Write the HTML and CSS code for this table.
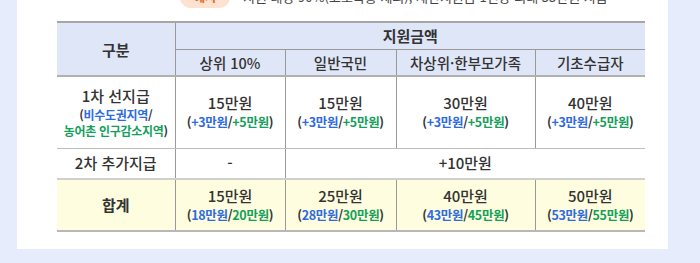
FILE: index.html
```html
<!DOCTYPE html>
<html lang="ko">
<head>
<meta charset="utf-8">
<link rel="stylesheet" href="styles.css">
</head>
<body>
<div class="page">
  <div class="card">
    <div class="notice">
      <span class="pill">예시</span>
      <span class="notice-text">지원 대상 90%(고소득층 제외), 재난지원금 1인당 최대 55만원 지급</span>
    </div>
    <table class="grid">
      <colgroup>
        <col class="c0"><col class="c1"><col class="c2"><col class="c3"><col class="c4">
      </colgroup>
      <thead>
        <tr class="h1">
          <th rowspan="2" class="first">구분</th>
          <th colspan="4">지원금액</th>
        </tr>
        <tr class="h2">
          <th>상위 10%</th>
          <th>일반국민</th>
          <th>차상위·한부모가족</th>
          <th>기초수급자</th>
        </tr>
      </thead>
      <tbody>
        <tr class="r1">
          <td class="first">
            <div class="main">1차 선지급</div>
            <div class="sub">(<span class="b">비수도권지역</span>/</div>
            <div class="sub"><span class="g">농어촌 인구감소지역</span>)</div>
          </td>
          <td><div class="main">15만원</div><div class="sub">(<span class="b">+3만원</span>/<span class="g">+5만원</span>)</div></td>
          <td><div class="main">15만원</div><div class="sub">(<span class="b">+3만원</span>/<span class="g">+5만원</span>)</div></td>
          <td><div class="main">30만원</div><div class="sub">(<span class="b">+3만원</span>/<span class="g">+5만원</span>)</div></td>
          <td><div class="main">40만원</div><div class="sub">(<span class="b">+3만원</span>/<span class="g">+5만원</span>)</div></td>
        </tr>
        <tr class="r2">
          <td class="first"><span class="main">2차 추가지급</span></td>
          <td><span class="main">-</span></td>
          <td colspan="3"><span class="main">+10만원</span></td>
        </tr>
        <tr class="total">
          <td class="first"><span class="main strong">합계</span></td>
          <td><div class="main">15만원</div><div class="sub">(<span class="b">18만원</span>/<span class="g">20만원</span>)</div></td>
          <td><div class="main">25만원</div><div class="sub">(<span class="b">28만원</span>/<span class="g">30만원</span>)</div></td>
          <td><div class="main">40만원</div><div class="sub">(<span class="b">43만원</span>/<span class="g">45만원</span>)</div></td>
          <td><div class="main">50만원</div><div class="sub">(<span class="b">53만원</span>/<span class="g">55만원</span>)</div></td>
        </tr>
      </tbody>
    </table>
  </div>
</div>
</body>
</html>
```
FILE: styles.css
```css
* { box-sizing: border-box; }
html, body {
  margin: 0;
  padding: 0;
  background: #e6ecfb;
  overflow: hidden;
}
body {
  font-family: "Noto Sans CJK KR", "Noto Sans", sans-serif;
  color: #333;
}
.page {
  width: 700px;
  height: 263px;
  padding: 0 32px 0 17px;
}
.card {
  width: 651px;
  margin-top: -14px;
  background: #fff;
  padding: 0 0 17px 40px;
}
.notice {
  height: 22px;
  display: flex;
  align-items: center;
  margin-left: 123px;
}
.pill {
  display: inline-block;
  width: 50px;
  height: 22px;
  line-height: 22px;
  border-radius: 11px;
  background: #fde2cf;
  color: #e4661c;
  font-size: 12px;
  font-weight: 700;
  text-align: center;
}
.notice-text {
  margin-left: 13px;
  font-size: 13px;
  color: #444;
  line-height: 22px;
}
.grid {
  margin-top: 13px;
  width: 588px;
  border-collapse: collapse;
  table-layout: fixed;
  font-size: 14px;
}
.c0 { width: 118px; }
.c1 { width: 110px; }
.c2 { width: 111px; }
.c3 { width: 139px; }
.c4 { width: 110px; }
th, td {
  padding: 0;
  text-align: center;
  vertical-align: middle;
  border-left: 1px solid #999;
}
th.first, td.first { border-left: none; }
thead th {
  background: #dfe6f7;
  font-weight: 700;
  color: #333;
  font-size: 15px;
}
.h1 th { height: 27px; border-top: 2px solid #a6a6a6; }
.h1 th[colspan] { border-bottom: 1px solid #999; }
.h2 th { height: 27px; font-size: 14.5px; font-weight: 500; border-bottom: 2px solid #b0b0b0; }
.h1 th.first { border-bottom: 2px solid #b0b0b0; }
.r1 td { height: 72px; border-bottom: 1px solid #bdbdbd; }
.r2 td { height: 31px; }
.total td {
  height: 52px;
  background: #fefddf;
  border-top: 2px solid #d0d0d0;
  border-bottom: 2px solid #b8b8b8;
}
.main {
  font-size: 15px;
  font-weight: 500;
  line-height: 20px;
  color: #333;
}
.strong { font-weight: 700; }
.sub {
  font-size: 12.5px;
  font-weight: 700;
  line-height: 18px;
  color: #333;
  letter-spacing: -0.3px;
}
.r1 td.first .main { margin-bottom: 1px; }
.r1 td.first .sub { font-size: 12px; line-height: 16px; }
.b { color: #2e6be0; }
.g { color: #13a05a; }
```
